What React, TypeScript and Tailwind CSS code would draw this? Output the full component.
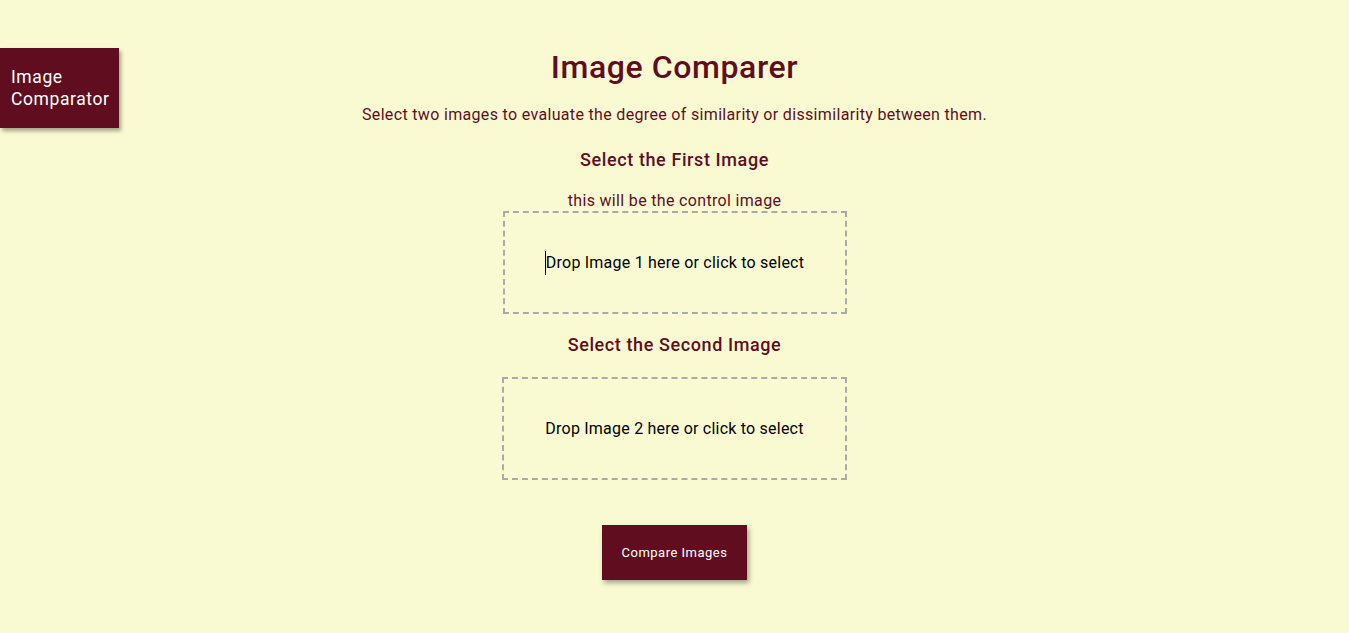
export default function App() {
  return (
    <div
      className="min-h-screen bg-[#fafad2] text-[#600e1f] grid grid-cols-[120px_1fr_120px]"
      style={{ fontFamily: "Roboto, 'Noto Sans', sans-serif" }}
    >
      <aside className="pt-12">
        <div className="w-[119px] h-[80px] bg-[#600e1f] text-white text-[17.5px] leading-[22px] tracking-[0.6px] pl-[11px] pt-[18px] shadow-[2px_3px_4px_rgba(0,0,0,0.35)]">
          Image
          <br />
          Comparator
        </div>
      </aside>

      <main className="flex flex-col items-center pt-12">
        <h1 className="text-[32px] leading-[38px] font-medium tracking-[0.6px]">Image Comparer</h1>
        <p className="mt-[17px] text-[16px] leading-6 tracking-[0.33px]">
          Select two images to evaluate the degree of similarity or dissimilarity between them.
        </p>

        <h2 className="mt-[21px] text-[18px] leading-6 font-medium tracking-[0.6px]">Select the First Image</h2>
        <p className="mt-[19px] text-[16px] leading-5 tracking-[0.33px]">this will be the control image</p>
        <div className="w-[344px] h-[103px] border-2 border-dashed border-[#aaaaaa] flex items-center justify-center text-[16px] text-black tracking-[0.22px]">
          <span className="border-l border-black">Drop Image 1 here or click to select</span>
        </div>

        <h2 className="mt-[19px] text-[18px] leading-6 font-medium tracking-[0.6px]">Select the Second Image</h2>
        <div className="mt-5 w-[345px] h-[103px] border-2 border-dashed border-[#aaaaaa] flex items-center justify-center text-[16px] text-black tracking-[0.22px]">
          Drop Image 2 here or click to select
        </div>

        <button className="mt-[45px] w-[145px] h-[55px] bg-[#600e1f] text-white text-[13px] tracking-[0.5px] shadow-[2px_3px_5px_rgba(0,0,0,0.35)]">
          Compare Images
        </button>
      </main>

      <div />
    </div>
  );
}
